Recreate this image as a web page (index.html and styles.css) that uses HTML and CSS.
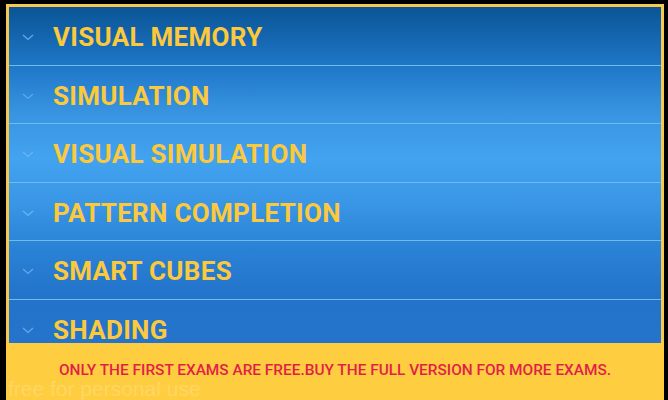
FILE: index.html
```html
<!DOCTYPE html>
<html>
<head>
<meta charset="utf-8">
<link rel="stylesheet" href="styles.css">
</head>
<body>
<div class="frame">
  <div class="list">
    <div class="row"><span class="chev"><svg width="12" height="7" viewBox="0 0 12 7"><path d="M1 1 L6 5.5 L11 1" fill="none" stroke="#5ea9ea" stroke-width="1.3"/></svg></span><span class="label">VISUAL MEMORY</span></div>
    <div class="row"><span class="chev"><svg width="12" height="7" viewBox="0 0 12 7"><path d="M1 1 L6 5.5 L11 1" fill="none" stroke="#5ea9ea" stroke-width="1.3"/></svg></span><span class="label">SIMULATION</span></div>
    <div class="row"><span class="chev"><svg width="12" height="7" viewBox="0 0 12 7"><path d="M1 1 L6 5.5 L11 1" fill="none" stroke="#6ab4f2" stroke-width="1.3"/></svg></span><span class="label">VISUAL SIMULATION</span></div>
    <div class="row"><span class="chev"><svg width="12" height="7" viewBox="0 0 12 7"><path d="M1 1 L6 5.5 L11 1" fill="none" stroke="#6ab4f2" stroke-width="1.3"/></svg></span><span class="label">PATTERN COMPLETION</span></div>
    <div class="row"><span class="chev"><svg width="12" height="7" viewBox="0 0 12 7"><path d="M1 1 L6 5.5 L11 1" fill="none" stroke="#5ea9ea" stroke-width="1.3"/></svg></span><span class="label">SMART CUBES</span></div>
    <div class="row"><span class="chev"><svg width="12" height="7" viewBox="0 0 12 7"><path d="M1 1 L6 5.5 L11 1" fill="none" stroke="#5ea9ea" stroke-width="1.3"/></svg></span><span class="label">SHADING</span></div>
  </div>
  <div class="banner">ONLY THE FIRST EXAMS ARE FREE.BUY THE FULL VERSION FOR MORE EXAMS.</div>
</div>
<div class="watermark">free for personal use</div>
</body>
</html>
```
FILE: styles.css
```css
html, body {
  margin: 0;
  padding: 0;
  background: #000;
  width: 668px;
  height: 400px;
  overflow: hidden;
  font-family: Roboto, "Liberation Sans", sans-serif;
}
.frame {
  margin: 4px 0 0 6px;
  width: 658px;
  height: 396px;
  background: #f7c94c;
  display: flex;
  flex-direction: column;
}
.list {
  margin: 3px 3px 0 3px;
  height: 336px;
  overflow: hidden;
  background: linear-gradient(to bottom, #0a5496 0%, #1f78c8 18%, #3995e2 32%, #42a3f0 45%, #3a96e6 58%, #2a82d6 72%, #2373cb 86%, #2474cc 100%);
}
.row {
  box-sizing: border-box;
  height: 58.5px;
  border-bottom: 1px solid #72b9ee;
  display: flex;
  align-items: center;
  padding-left: 13px;
  padding-top: 3px;
}
.chev {
  width: 31px;
  display: flex;
  align-items: center;
  margin-top: 1px;
}
.label {
  color: #fbc93b;
  font-weight: 700;
  font-size: 26px;
  letter-spacing: 0.3px;
}
.banner {
  flex: 1;
  background: #ffcd40;
  color: #e21f48;
  font-size: 15.4px;
  font-weight: 500;
  display: flex;
  justify-content: center;
  padding-top: 18px;
  box-sizing: border-box;
}
.watermark {
  position: absolute;
  left: 8px;
  top: 377px;
  font-size: 21px;
  color: rgba(255, 255, 255, 0.2);
  font-family: "Liberation Sans", sans-serif;
}
```
